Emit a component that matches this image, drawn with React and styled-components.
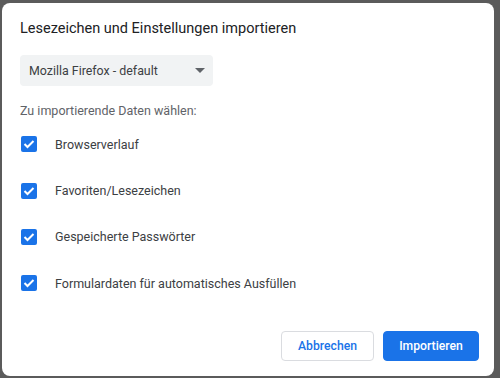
import React from "react";
import styled, { createGlobalStyle } from "styled-components";

const Global = createGlobalStyle`
  html, body { margin: 0; padding: 0; background: #5b5b5b; }
  body { font-family: Roboto, "Noto Sans", "Liberation Sans", sans-serif; }
  #root { width: 500px; height: 378px; }
`;

const Page = styled.div`
  box-sizing: border-box;
  width: 500px;
  height: 378px;
  padding: 3px 6px 2px 2px;
`;

const Dialog = styled.div`
  box-sizing: border-box;
  height: 100%;
  background: #fff;
  border-radius: 8px;
  padding: 16px 15px 15px 18px;
  display: flex;
  flex-direction: column;
`;

const Title = styled.h1`
  margin: 0;
  font-size: 14.5px;
  font-weight: 400;
  color: #202124;
  line-height: 20px;
`;

const Select = styled.div`
  margin-top: 16px;
  width: 193px;
  height: 31px;
  box-sizing: border-box;
  background: #f1f3f4;
  border-radius: 4px;
  display: flex;
  align-items: center;
  justify-content: space-between;
  padding: 0 8px 0 9px;
  font-size: 12.4px;
  color: #3c4043;
`;

const Arrow = styled.span`
  width: 0;
  height: 0;
  border-left: 5px solid transparent;
  border-right: 5px solid transparent;
  border-top: 5px solid #5f6368;
`;

const Subtitle = styled.div`
  margin-top: 17px;
  font-size: 12.5px;
  color: #5f6368;
  line-height: 16px;
`;

const List = styled.div`
  margin-top: 2px;
  display: flex;
  flex-direction: column;
`;

const Row = styled.label`
  height: 46.4px;
  display: flex;
  align-items: center;
  font-size: 12.5px;
  color: #3c4043;
`;

const Box = styled.span`
  width: 16px;
  height: 16px;
  margin-left: 1px;
  border-radius: 2px;
  background: #1a73e8;
  display: flex;
  align-items: center;
  justify-content: center;
  margin-right: 18px;
`;

const Footer = styled.div`
  margin-top: auto;
  display: flex;
  justify-content: flex-end;
  gap: 9px;
`;

const Button = styled.button`
  height: 30px;
  width: ${(p) => p.$w}px;
  box-sizing: border-box;
  border-radius: 4px;
  font-family: Roboto, "Noto Sans", sans-serif;
  font-size: 12.2px;
  font-weight: 500;
  cursor: pointer;
  border: 1px solid ${(p) => (p.$primary ? "#1a73e8" : "#dadce0")};
  background: ${(p) => (p.$primary ? "#1a73e8" : "#fff")};
  color: ${(p) => (p.$primary ? "#fff" : "#1a73e8")};
`;

const Check = () => (
  <svg width="12" height="10" viewBox="0 0 12 10">
    <path d="M1.5 5 L4.5 8 L10.5 2" fill="none" stroke="#fff" strokeWidth="2" />
  </svg>
);

const items = [
  "Browserverlauf",
  "Favoriten/Lesezeichen",
  "Gespeicherte Passwörter",
  "Formulardaten für automatisches Ausfüllen",
];

export default function App() {
  return (
    <>
      <Global />
      <Page>
        <Dialog>
          <Title>Lesezeichen und Einstellungen importieren</Title>
          <Select>
            <span>Mozilla Firefox - default</span>
            <Arrow />
          </Select>
          <Subtitle>Zu importierende Daten wählen:</Subtitle>
          <List>
            {items.map((t) => (
              <Row key={t}>
                <Box>
                  <Check />
                </Box>
                {t}
              </Row>
            ))}
          </List>
          <Footer>
            <Button $w={93}>Abbrechen</Button>
            <Button $w={96} $primary>Importieren</Button>
          </Footer>
        </Dialog>
      </Page>
    </>
  );
}
